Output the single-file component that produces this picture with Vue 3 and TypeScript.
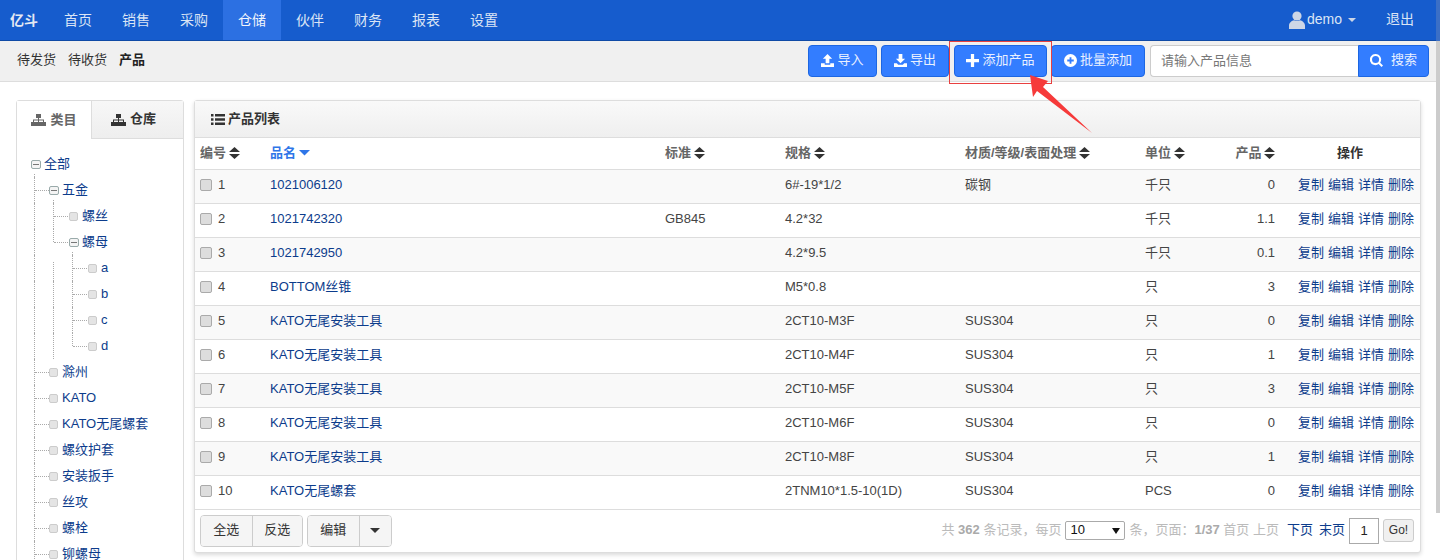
<script setup lang="ts">
interface Row { no: number; name: string; std: string; spec: string; mat: string; unit: string; qty: string }
interface TreeRow { text: string; level: number; open?: boolean; guides: [number, string][]; branch?: boolean }

const navItems = ['首页', '销售', '采购', '仓储', '伙伴', '财务', '报表', '设置']
const columns = [
  { label: '编号', cls: 'c-no' },
  { label: '品名', cls: 'c-name', active: true },
  { label: '标准', cls: 'c-std' },
  { label: '规格', cls: 'c-spec' },
  { label: '材质/等级/表面处理', cls: 'c-mat' },
  { label: '单位', cls: 'c-unit' },
  { label: '产品', cls: 'c-qty' }
]
const kato = 'KATO无尾安装工具'
const rows: Row[] = [
  { no: 1, name: '1021006120', std: '', spec: '6#-19*1/2', mat: '碳钢', unit: '千只', qty: '0' },
  { no: 2, name: '1021742320', std: 'GB845', spec: '4.2*32', mat: '', unit: '千只', qty: '1.1' },
  { no: 3, name: '1021742950', std: '', spec: '4.2*9.5', mat: '', unit: '千只', qty: '0.1' },
  { no: 4, name: 'BOTTOM丝锥', std: '', spec: 'M5*0.8', mat: '', unit: '只', qty: '3' },
  { no: 5, name: kato, std: '', spec: '2CT10-M3F', mat: 'SUS304', unit: '只', qty: '0' },
  { no: 6, name: kato, std: '', spec: '2CT10-M4F', mat: 'SUS304', unit: '只', qty: '1' },
  { no: 7, name: kato, std: '', spec: '2CT10-M5F', mat: 'SUS304', unit: '只', qty: '3' },
  { no: 8, name: kato, std: '', spec: '2CT10-M6F', mat: 'SUS304', unit: '只', qty: '0' },
  { no: 9, name: kato, std: '', spec: '2CT10-M8F', mat: 'SUS304', unit: '只', qty: '1' },
  { no: 10, name: 'KATO无尾螺套', std: '', spec: '2TNM10*1.5-10(1D)', mat: 'SUS304', unit: 'PCS', qty: '0' }
]
const ops = ['复制', '编辑', '详情', '删除']

const tree: TreeRow[] = [
  { text: '全部', level: 0, open: true, guides: [[17, 'tail']] },
  { text: '五金', level: 1, open: true, branch: true, guides: [[17, 'full'], [36, 'tail']] },
  { text: '螺丝', level: 2, branch: true, guides: [[17, 'full'], [36, 'full']] },
  { text: '螺母', level: 2, open: true, branch: true, guides: [[17, 'full'], [36, 'half'], [55, 'tail']] },
  { text: 'a', level: 3, branch: true, guides: [[17, 'full'], [36, 'low'], [55, 'full']] },
  { text: 'b', level: 3, branch: true, guides: [[17, 'full'], [36, 'full'], [55, 'full']] },
  { text: 'c', level: 3, branch: true, guides: [[17, 'full'], [36, 'full'], [55, 'full']] },
  { text: 'd', level: 3, branch: true, guides: [[17, 'full'], [36, 'full'], [55, 'half']] },
  ...['滁州', 'KATO', 'KATO无尾螺套', '螺纹护套', '安装扳手', '丝攻', '螺栓', '铆螺母'].map(
    (text): TreeRow => ({ text, level: 1, branch: true, guides: [[17, 'full']] })
  )
]
const indents = [14, 32, 52, 71]
const branchLefts = [0, 18, 37, 56]
</script>

<template>
  <div class="page">
    <header class="topbar">
      <span class="logo">亿斗</span>
      <nav class="nav">
        <a v-for="item in navItems" :key="item" class="nav-item" :class="{ active: item === '仓储' }">{{ item }}</a>
      </nav>
      <div class="nav-right">
        <a class="user">
          <svg class="user-icon" viewBox="0 0 16 18"><circle cx="8" cy="5" r="4.6" /><path d="M0 18v-3.4C0 11.5 3 9.6 5 9.2c1.7 1.1 4.3 1.1 6 0 2 .4 5 2.3 5 5.4V18z" /></svg>
          demo
          <i class="caret-light"></i>
        </a>
        <a class="logout">退出</a>
      </div>
    </header>

    <div class="subbar">
      <div class="subtabs">
        <a>待发货</a><a>待收货</a><a class="current">产品</a>
      </div>
      <div class="toolbar">
        <button class="btn w-import">
          <svg class="ico" viewBox="0 0 14 14"><path d="M7 0l5 5H9v5H5V5H2zM0 10h4v1.500h6V10h4v4H0z" /></svg>导入
        </button>
        <button class="btn w-export">
          <svg class="ico" viewBox="0 0 14 14"><path d="M5 0h4v5h3l-5 5-5-5h3zM0 10h3l1.500 1.500h5L11 10h3v4H0z" /></svg>导出
        </button>
        <button class="btn w-add">
          <svg class="ico" viewBox="0 0 12 12"><path d="M4.500 0h3v4.500H12v3H7.500V12h-3V7.500H0v-3h4.500z" /></svg>添加产品
        </button>
        <button class="btn w-batch">
          <svg class="ico" viewBox="0 0 14 14"><path fill-rule="evenodd" d="M7 0a7 7 0 1 1 0 14A7 7 0 0 1 7 0zM6 3.500V6H3.500v2H6v2.500h2V8h2.500V6H8V3.500z" /></svg>批量添加
        </button>
        <div class="search">
          <input class="search-input" placeholder="请输入产品信息" />
          <button class="search-btn">
            <svg class="ico" viewBox="0 0 14 14"><path fill-rule="evenodd" d="M6 0a6 6 0 0 1 4.900 9.400l3.100 3.100-1.600 1.500-3.100-3.100A6 6 0 1 1 6 0zm0 2.200a3.800 3.800 0 1 0 0 7.600 3.800 3.800 0 0 0 0-7.600z" /></svg>
            搜索
          </button>
        </div>
      </div>
    </div>

    <main class="main">
      <aside class="side">
        <div class="tabs">
          <div class="tab on">
            <svg class="sitemap" viewBox="0 0 15 12"><path d="M5 0h5v4H8v1.500h5V8h2v4h-5V8h2V6.500H8V8h2v4H5V8h2V6.500H3V8h2v4H0V8h2V5.500h5V4H5z" /></svg>类目
          </div>
          <div class="tab rest">
            <svg class="sitemap" viewBox="0 0 15 12"><path d="M5 0h5v4H8v1.500h5V8h2v4h-5V8h2V6.500H8V8h2v4H5V8h2V6.500H3V8h2v4H0V8h2V5.500h5V4H5z" /></svg>仓库
          </div>
        </div>
        <div class="tree">
          <div v-for="node in tree" :key="node.text" class="node" :style="{ paddingLeft: indents[node.level] + 'px' }">
            <i v-for="g in node.guides" :key="g[0]" class="guide" :class="g[1]" :style="{ left: g[0] + 'px' }"></i>
            <i v-if="node.branch" class="branch" :style="{ left: branchLefts[node.level] + 'px' }"></i>
            <span class="node-box" :class="{ open: node.open }"></span>
            <a class="node-text">{{ node.text }}</a>
          </div>
        </div>
      </aside>

      <section class="panel">
        <div class="panel-head">
          <svg class="list-ico" viewBox="0 0 14 11"><path d="M0 0h2.500v2.500H0zM4 0h10v2.500H4zM0 4.200h2.500v2.500H0zM4 4.200h10v2.500H4zM0 8.400h2.500v2.500H0zM4 8.400h10v2.500H4z" /></svg>
          产品列表
        </div>
        <table class="grid">
          <thead>
            <tr>
              <th v-for="col in columns" :key="col.label" :class="[col.cls, { active: col.active }]">
                {{ col.label }}
                <svg v-if="col.active" class="sort" viewBox="0 0 11 12"><path d="M0 3h11L5.500 8.500z" /></svg>
                <svg v-else class="sort" viewBox="0 0 11 12"><path d="M0 5L5.500 0 11 5zM0 7h11l-5.500 5z" /></svg>
              </th>
              <th class="c-ops center">操作</th>
            </tr>
          </thead>
          <tbody>
            <tr v-for="row in rows" :key="row.no">
              <td><span class="check"></span>{{ row.no }}</td>
              <td><a class="link">{{ row.name }}</a></td>
              <td>{{ row.std }}</td>
              <td>{{ row.spec }}</td>
              <td>{{ row.mat }}</td>
              <td>{{ row.unit }}</td>
              <td class="right">{{ row.qty }}</td>
              <td class="ops"><a v-for="op in ops" :key="op" class="link">{{ op }}</a></td>
            </tr>
          </tbody>
        </table>
        <div class="panel-foot">
          <div class="groups">
            <div class="group"><button class="gbtn w50">全选</button><button class="gbtn w50">反选</button></div>
            <div class="group"><button class="gbtn w50">编辑</button><button class="gbtn w32"><i class="caret-dark"></i></button></div>
          </div>
          <div class="pager">
            <span>共 <b>362</b> 条记录，每页</span>
            <span class="pg-select">10<i class="caret-black"></i></span>
            <span>条，页面：<b>1/37</b> 首页 上页</span>
            <a class="pg-link next">下页</a>
            <a class="pg-link last">末页</a>
            <input class="pg-input" value="1" />
            <button class="pg-go">Go!</button>
          </div>
        </div>
      </section>
    </main>

    <div class="highlight"></div>
    <svg class="arrow" viewBox="0 0 70 65"><path d="M1 1l18 6-5 6 49 46L8 17l-4 6z" /></svg>
    <div class="scrollbar"><div class="sb-top"></div><div class="sb-body"></div></div>
  </div>
</template>

<style>
html, body { margin: 0; overflow: hidden; background: #fff; }
</style>

<style scoped>
.page {
  position: relative;
  width: 1440px;
  height: 560px;
  overflow: hidden;
  font: 13px/1.4 "Liberation Sans", "Noto Sans CJK SC", sans-serif;
  color: #444;
}
a { cursor: pointer; }
i { display: inline-block; }
button { font: inherit; cursor: pointer; }

.topbar {
  display: flex;
  align-items: stretch;
  height: 40px;
  background: #165ccd;
  border-bottom: 1px solid #0f4aa6;
  color: #dbe5f5;
  font-size: 14px;
}
.logo { width: 39px; padding-left: 10px; line-height: 41px; font-size: 14px; font-weight: 700; color: #e4e9f2; }
.nav { display: flex; }
.nav-item { width: 58px; line-height: 40px; text-align: center; }
.nav-item.active { background: #2c70e2; color: #f2f6fc; }
.nav-right { display: flex; align-items: center; margin-left: auto; padding-right: 26px; }
.user { display: flex; align-items: center; gap: 2px; margin-right: 30px; }
.user-icon { width: 16px; height: 18px; fill: #cdd6e6; }
.caret-light { margin-left: 4px; border: 4px solid transparent; border-top-color: #cdd6e6; border-bottom: 0; }

.subbar {
  display: flex;
  align-items: flex-start;
  justify-content: space-between;
  height: 41px;
  padding: 4px 11px 0 17px;
  box-sizing: border-box;
  background: #f0f0f0;
  border-bottom: 1px solid #ddd;
}
.subtabs { display: flex; gap: 12px; line-height: 30px; color: #333; }
.subtabs .current { font-weight: 700; color: #222; }
.toolbar { display: flex; gap: 4px; }
.btn {
  display: flex;
  align-items: center;
  justify-content: center;
  height: 32px;
  padding: 0 0 2px;
  gap: 3px;
  background: #337dff;
  border: 1px solid #1c66e2;
  border-radius: 4px;
  color: #e9f0ff;
}
.w-import { width: 69px; }
.w-export { width: 68px; }
.w-add { width: 93px; margin-left: 1px; }
.w-batch { width: 94px; }
.ico { width: 13px; height: 13px; fill: #fff; flex: none; }
.search { display: flex; margin-left: 1px; }
.search-input {
  width: 208px;
  height: 32px;
  padding: 0 10px 2px;
  box-sizing: border-box;
  border: 1px solid #ccc;
  border-right: 0;
  border-radius: 4px 0 0 4px;
  background: #fff;
  font: inherit;
  outline: none;
}
.search-input::placeholder { color: #777; opacity: 1; }
.search-btn {
  display: flex;
  align-items: center;
  justify-content: center;
  gap: 8px;
  width: 71px;
  height: 32px;
  padding: 0 0 2px;
  background: #337dff;
  border: 1px solid #1c66e2;
  border-radius: 0 4px 4px 0;
  color: #e9f0ff;
}

.main { display: flex; align-items: flex-start; gap: 10px; padding: 18px 19px 0 16px; }
.side {
  width: 168px;
  height: 480px;
  box-sizing: border-box;
  flex: none;
  border: 1px solid #ddd;
  border-radius: 3px 3px 0 0;
}
.tabs { display: flex; height: 37px; background: linear-gradient(#f7f7f7, #eee); border-bottom: 1px solid #ddd; }
.tab {
  display: flex;
  align-items: center;
  justify-content: center;
  gap: 4px;
  flex: 1;
  font-weight: 700;
  color: #333;
}
.tab.rest { padding-right: 8px; }
.tab.on {
  flex: none;
  width: 75px;
  height: 38px;
  background: #fff;
  border-right: 1px solid #ddd;
  color: #666;
  box-sizing: border-box;
}
.sitemap { width: 15px; height: 12px; fill: currentColor; }
.tree { padding-top: 12px; }
.node {
  position: relative;
  display: flex;
  align-items: center;
  height: 26px;
  box-sizing: border-box;
}
.guide { position: absolute; top: 0; bottom: 0; border-left: 1px dotted #aaa; }
.guide.tail { top: 23px; bottom: 0; }
.guide.half { bottom: 13px; }
.guide.low { top: 7px; }
.branch { position: absolute; top: 13px; width: 14px; border-top: 1px dotted #aaa; }
.node-box {
  position: relative;
  flex: none;
  width: 7px;
  height: 7px;
  margin-right: 4px;
  background: #e4e4e4;
  border: 1px solid #ccc;
  border-radius: 2px;
}
.node-box.open { width: 8px; margin-right: 3px; background: #f4f4f4; border-color: #9aa; }
.node-box.open::after { content: ""; position: absolute; left: 1px; right: 1px; top: 3px; border-top: 1px solid #777; }
.node-text { color: #0c3c8c; white-space: nowrap; }

.panel {
  flex: 1;
  box-sizing: border-box;
  height: 453px;
  border: 1px solid #ddd;
  border-radius: 3px;
  box-shadow: 0 2px 4px rgba(0, 0, 0, .15);
  background: #fff;
}
.panel-head {
  display: flex;
  align-items: center;
  gap: 3px;
  height: 36px;
  padding-left: 16px;
  background: linear-gradient(#f9f9f9, #efefef);
  border-bottom: 1px solid #ddd;
  font-weight: 700;
  color: #333;
}
.list-ico { width: 14px; height: 11px; fill: #333; }
.grid { width: 1225px; table-layout: fixed; border-collapse: collapse; }
.grid th {
  height: 31px;
  box-sizing: border-box;
  padding: 0 5px;
  text-align: left;
  color: #666;
  font-weight: 700;
  white-space: nowrap;
  border-bottom: 1px solid #ddd;
}
.grid th.active { color: #2f76e8; }
.grid th.active .sort { fill: #2f76e8; }
.grid th.center { text-align: center; color: #333; }
.grid th.c-qty { text-align: right; }
.sort { width: 11px; height: 12px; margin-left: -1px; vertical-align: -2px; fill: #333; }
.c-no { width: 70px; }
.c-name { width: 395px; }
.c-std { width: 120px; }
.c-spec { width: 180px; }
.c-mat { width: 180px; }
.c-unit { width: 80px; }
.c-qty { width: 60px; }
.c-ops { width: 140px; }
.grid td {
  height: 34px;
  box-sizing: border-box;
  padding: 0 5px 2px;
  border-bottom: 1px solid #ddd;
  white-space: nowrap;
}
.grid tbody tr:nth-child(odd) td { background: #f9f9f9; }
.grid td.right { text-align: right; padding-right: 5px; }
.grid td.ops { text-align: right; padding-right: 6px; }
.ops a { margin-left: 4px; }
.link { color: #0c3c8c; }
.check {
  display: inline-block;
  width: 10px;
  height: 10px;
  margin-right: 6px;
  vertical-align: -2px;
  background: #ddd;
  border: 1px solid #aaa;
  border-radius: 2px;
}
.panel-foot { display: flex; justify-content: space-between; align-items: center; height: 42px; padding: 0 6px 0 5px; }
.groups { display: flex; gap: 4px; }
.group { display: flex; border: 1px solid #ccc; border-radius: 4px; overflow: hidden; }
.gbtn {
  display: flex;
  align-items: center;
  justify-content: center;
  height: 30px;
  padding: 0;
  background: #f5f5f5;
  border: 0;
  border-left: 1px solid #ccc;
  color: #333;
}
.gbtn:first-child { border-left: 0; }
.w50 { width: 50.5px; }
.w32 { width: 32px; }
.caret-dark { border: 5px solid transparent; border-top-color: #333; border-bottom: 0; }
.pager { display: flex; align-items: center; gap: 4px; color: #bbb; font-size: 13px; white-space: nowrap; }
.pager b { color: #aaa; }
.pg-select {
  display: flex;
  align-items: center;
  justify-content: space-between;
  box-sizing: border-box;
  width: 60px;
  height: 19px;
  padding: 0 4px;
  border: 1px solid #aaa;
  border-radius: 2px;
  color: #111;
  font-size: 13px;
}
.caret-black { border: 4px solid transparent; border-top: 6px solid #111; border-bottom: 0; }
.pg-link { color: #0c3c8c; }
.pg-link.next { margin-left: 4px; }
.pg-link.last { margin-left: 2px; }
.pg-input {
  width: 30px;
  height: 26px;
  padding: 0;
  box-sizing: border-box;
  border: 1px solid #aaa;
  text-align: center;
  font: inherit;
  color: #222;
  outline: none;
}
.pg-go {
  width: 31px;
  height: 23px;
  padding: 0;
  background: #f0f0f0;
  border: 1px solid #ccc;
  border-radius: 3px;
  color: #333;
  font-size: 12px;
}

.highlight {
  position: absolute;
  left: 949px;
  top: 41px;
  width: 101px;
  height: 41px;
  border: 1px solid #e84040;
}
.arrow { position: absolute; left: 1029px; top: 74px; width: 70px; height: 65px; fill: #f63a3a; }
.scrollbar { position: absolute; top: 0; right: 0; width: 4px; height: 513px; display: flex; flex-direction: column; }
.sb-top { height: 41px; background: #3b6fc6; }
.sb-body { flex: 1; background: #ccc; }
</style>
